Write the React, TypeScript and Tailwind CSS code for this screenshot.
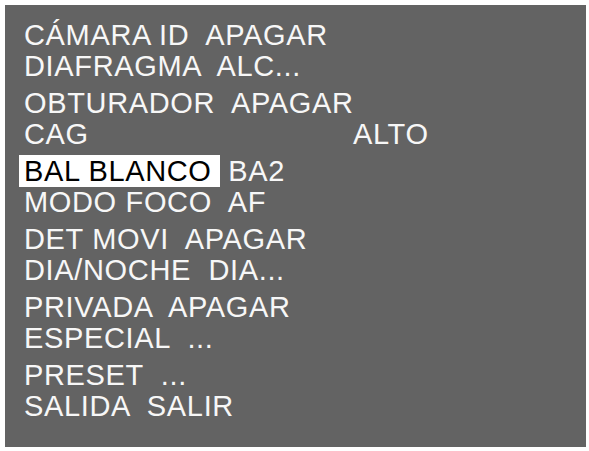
const groups: [string, string][][] = [
  [["CÁMARA ID", "APAGAR"], ["DIAFRAGMA", "ALC..."]],
  [["OBTURADOR", "APAGAR"], ["CAG", "ALTO"]],
  [["BAL BLANCO", "BA2"], ["MODO FOCO", "AF"]],
  [["DET MOVI", "APAGAR"], ["DIA/NOCHE", "DIA..."]],
  [["PRIVADA", "APAGAR"], ["ESPECIAL", "..."]],
  [["PRESET", "..."], ["SALIDA", "SALIR"]],
]

function MenuLine({ label, value }: { label: string; value: string }) {
  // CAG puts its value in a column of its own
  if (label === "CAG") {
    return (
      <div className="flex h-[31px]">
        <span className="w-[329px]">{label}</span>
        <span>{value}</span>
      </div>
    )
  }

  // the selected row is drawn inverted
  if (label === "BAL BLANCO") {
    return (
      <div className="h-[31px] whitespace-pre">
        <span className="-ml-[5px] bg-white pl-[5px] pr-[8px] text-black">{label}</span>
        {" " + value}
      </div>
    )
  }

  return <div className="h-[31px] whitespace-pre">{label + "  " + value}</div>
}

export default function App() {
  return (
    <div className="h-[451px] w-[589px] bg-white p-[5px]">
      <div
        className="flex h-[442px] w-[581px] flex-col gap-[6px] bg-[#636363] pl-[19px] pt-[15px] text-[29px] leading-[31px] tracking-[0.65px] text-[#f7f7f7]"
        style={{ fontFamily: '"Liberation Sans", Arial, sans-serif' }}
      >
        {groups.map((group, i) => (
          <div key={i}>
            {group.map(([label, value]) => (
              <MenuLine key={label} label={label} value={value} />
            ))}
          </div>
        ))}
      </div>
    </div>
  )
}
